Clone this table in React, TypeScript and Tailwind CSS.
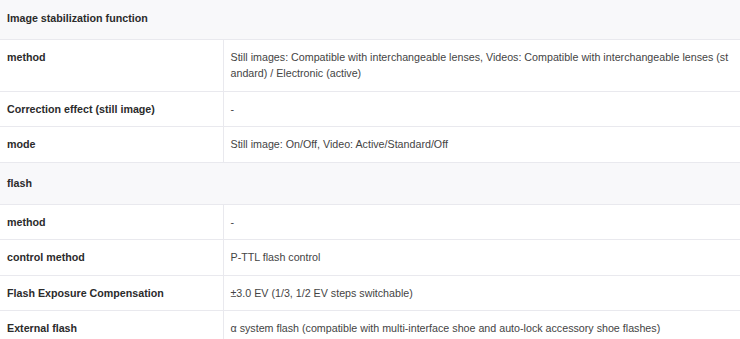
import React from "react";

type Row = { kind: "header"; label: string } | { kind: "row"; label: string; value: string };

const rows: Row[] = [
  { kind: "header", label: "Image stabilization function" },
  {
    kind: "row",
    label: "method",
    value:
      "Still images: Compatible with interchangeable lenses, Videos: Compatible with interchangeable lenses (standard) / Electronic (active)",
  },
  { kind: "row", label: "Correction effect (still image)", value: "-" },
  { kind: "row", label: "mode", value: "Still image: On/Off, Video: Active/Standard/Off" },
  { kind: "header", label: "flash" },
  { kind: "row", label: "method", value: "-" },
  { kind: "row", label: "control method", value: "P-TTL flash control" },
  { kind: "row", label: "Flash Exposure Compensation", value: "±3.0 EV (1/3, 1/2 EV steps switchable)" },
  {
    kind: "row",
    label: "External flash",
    value: "α system flash (compatible with multi-interface shoe and auto-lock accessory shoe flashes)",
  },
];

export default function App() {
  return (
    <div
      className="w-[740px] h-[339px] overflow-hidden bg-white text-[10.7px] leading-[16.4px] text-[#333]"
      style={{ fontFamily: '"Liberation Sans", Arial, sans-serif' }}
    >
      <table className="w-full border-collapse table-fixed -mt-[2.4px]">
        <colgroup>
          <col className="w-[223px]" />
          <col />
        </colgroup>
        <tbody>
          {rows.map((r, i) =>
            r.kind === "header" ? (
              <tr key={i} className="bg-[#f8f8fa] border-b border-[#e9e9ee]">
                <td colSpan={2} className="px-[7px] py-[12.5px] font-bold text-[#2b2b2b]">
                  {r.label}
                </td>
              </tr>
            ) : (
              <tr key={i} className="border-b border-[#e9e9ee]">
                <td className="px-[7px] py-[9px] font-bold text-[#2b2b2b] align-top border-r border-[#e9e9ee]">
                  {r.label}
                </td>
                <td className="pl-[7px] pr-[8px] py-[9px] align-top text-[#444] break-all">{r.value}</td>
              </tr>
            )
          )}
        </tbody>
      </table>
    </div>
  );
}
